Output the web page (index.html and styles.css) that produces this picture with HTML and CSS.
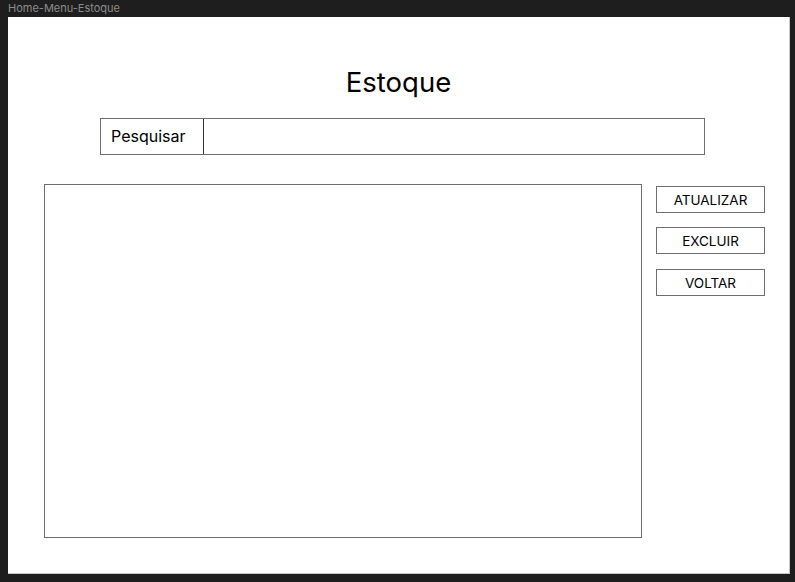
FILE: index.html
```html
<!DOCTYPE html>
<html lang="pt">
<head>
<meta charset="utf-8">
<title>Home-Menu-Estoque</title>
<link rel="stylesheet" href="styles.css">
</head>
<body>
<div class="frame-label">Home-Menu-Estoque</div>
<main class="frame">
  <h1 class="title">Estoque</h1>
  <div class="search">
    <div class="search-label">Pesquisar</div>
    <div class="search-input"></div>
  </div>
  <div class="content">
    <div class="table-box"></div>
    <div class="actions">
      <button class="btn">ATUALIZAR</button>
      <button class="btn">EXCLUIR</button>
      <button class="btn btn-last">VOLTAR</button>
    </div>
  </div>
</main>
</body>
</html>
```
FILE: styles.css
```css
html, body {
  margin: 0;
  padding: 0;
  background: #1e1e1e;
  width: 795px;
  height: 582px;
  overflow: hidden;
  font-family: Inter, "Noto Sans", sans-serif;
}
.frame-label {
  height: 17px;
  padding-left: 8px;
  font-size: 11px;
  line-height: 17px;
  color: #8c8c8c;
}
.frame {
  margin-left: 8px;
  background: #ffffff;
  box-sizing: border-box;
  border-right: 1px solid #c8c8c8;
  border-bottom: 1px solid #c8c8c8;
  width: 782px;
  height: 557px;
  padding-top: 48px;
}
.title {
  margin: 0;
  text-align: center;
  font-weight: 400;
  font-size: 27.5px;
  line-height: 34px;
  color: #000;
}
.search {
  display: flex;
  margin: 19px 0 0 92px;
  width: 605px;
  height: 37px;
  box-sizing: border-box;
  border: 1px solid #6e6e6e;
}
.search-label {
  width: 103px;
  border-right: 1px solid #333;
  font-size: 16px;
  line-height: 35px;
  padding-left: 10px;
  box-sizing: border-box;
  color: #000;
}
.search-input { flex: 1; }
.content {
  display: flex;
  margin: 29px 0 0 36px;
  gap: 14px;
}
.table-box {
  width: 598px;
  height: 354px;
  box-sizing: border-box;
  border: 1px solid #6e6e6e;
}
.actions {
  display: flex;
  flex-direction: column;
  gap: 14px;
  padding-top: 2px;
}
.btn {
  width: 109px;
  height: 27px;
  box-sizing: border-box;
  border: 1px solid #6e6e6e;
  background: #fff;
  font-family: Inter, "Noto Sans", sans-serif;
  font-size: 13.5px;
  color: #000;
  padding: 0;
  margin: 0;
}
.btn-last { margin-top: 1px; }
```
